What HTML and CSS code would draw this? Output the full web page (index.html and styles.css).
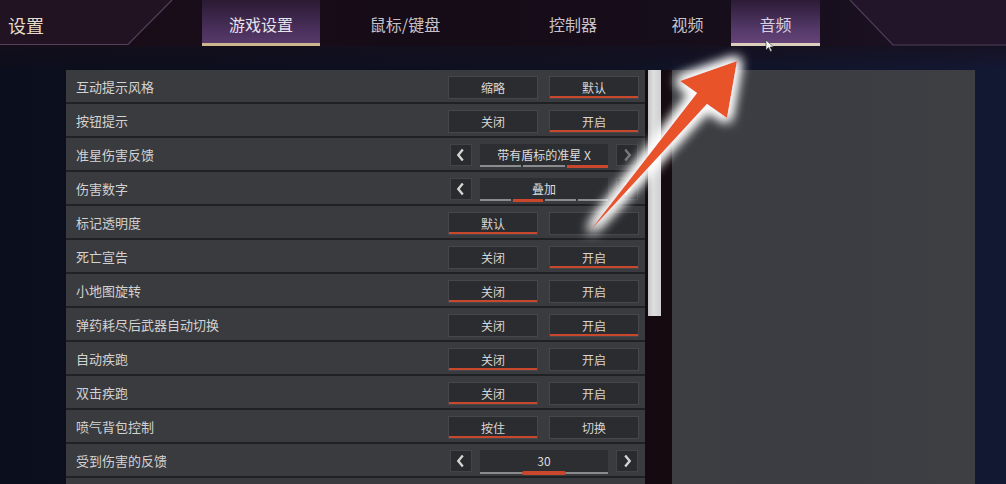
FILE: index.html
```html
<!DOCTYPE html>
<html lang="zh">
<head>
    <meta charset="UTF-8">
    <meta name="viewport" content="width=device-width, initial-scale=1.0">
    <title>设置</title>
    <link rel="stylesheet" href="styles.css">
</head>
<body>
    <header class="topbar">
        <svg class="topbar-lines" width="1006" height="47" viewBox="0 0 1006 47">
            <polygon points="0,0 172,0 128,44 0,44" fill="#221322"/>
            <polyline points="0,44.5 128,44.5 172,0" fill="none" stroke="#54405a" stroke-width="1.2"/>
            <polygon points="850,0 1006,0 1006,45 893,45" fill="#22152a"/>
            <polyline points="850,0 893,45 1006,45" fill="none" stroke="#4e3c5a" stroke-width="1.2"/>
        </svg>
        <div class="brand">设置</div>
        <nav class="tabs">
            <div class="tab tab-game active">游戏设置</div>
            <div class="tab tab-mouse">鼠标/键盘</div>
            <div class="tab tab-pad">控制器</div>
            <div class="tab tab-video">视频</div>
            <div class="tab tab-audio hover">音频</div>
        </nav>
    </header>

    <main class="content">
        <section class="settings">
            <div class="row">
                <span class="label">互动提示风格</span>
                <div class="choices"><div class="btn">缩略</div><div class="btn on">默认</div></div>
            </div>
            <div class="row">
                <span class="label">按钮提示</span>
                <div class="choices"><div class="btn">关闭</div><div class="btn on">开启</div></div>
            </div>
            <div class="row">
                <span class="label">准星伤害反馈</span>
                <div class="picker">
                    <div class="arrow"><svg viewBox="0 0 22 22"><polyline points="13,5 8,11 13,17"/></svg></div>
                    <div class="value">
                        带有盾标的准星 X
                        <div class="segments"><i></i><i></i><i class="on"></i></div>
                    </div>
                    <div class="arrow dim"><svg viewBox="0 0 22 22"><polyline points="9,5 14,11 9,17"/></svg></div>
                </div>
            </div>
            <div class="row">
                <span class="label">伤害数字</span>
                <div class="picker">
                    <div class="arrow"><svg viewBox="0 0 22 22"><polyline points="13,5 8,11 13,17"/></svg></div>
                    <div class="value">
                        叠加
                        <div class="segments"><i></i><i class="on"></i><i></i><i></i></div>
                    </div>
                    <div class="arrow"><svg viewBox="0 0 22 22"><polyline points="9,5 14,11 9,17"/></svg></div>
                </div>
            </div>
            <div class="row">
                <span class="label">标记透明度</span>
                <div class="choices"><div class="btn on">默认</div><div class="btn"></div></div>
            </div>
            <div class="row">
                <span class="label">死亡宣告</span>
                <div class="choices"><div class="btn">关闭</div><div class="btn on">开启</div></div>
            </div>
            <div class="row">
                <span class="label">小地图旋转</span>
                <div class="choices"><div class="btn on">关闭</div><div class="btn">开启</div></div>
            </div>
            <div class="row">
                <span class="label">弹药耗尽后武器自动切换</span>
                <div class="choices"><div class="btn">关闭</div><div class="btn on">开启</div></div>
            </div>
            <div class="row">
                <span class="label">自动疾跑</span>
                <div class="choices"><div class="btn on">关闭</div><div class="btn">开启</div></div>
            </div>
            <div class="row">
                <span class="label">双击疾跑</span>
                <div class="choices"><div class="btn on">关闭</div><div class="btn">开启</div></div>
            </div>
            <div class="row">
                <span class="label">喷气背包控制</span>
                <div class="choices"><div class="btn on">按住</div><div class="btn">切换</div></div>
            </div>
            <div class="row">
                <span class="label">受到伤害的反馈</span>
                <div class="picker">
                    <div class="arrow"><svg viewBox="0 0 22 22"><polyline points="13,5 8,11 13,17"/></svg></div>
                    <div class="value">
                        30
                        <div class="track"><b style="left: 33%; width: 34%;"></b></div>
                    </div>
                    <div class="arrow"><svg viewBox="0 0 22 22"><polyline points="9,5 14,11 9,17"/></svg></div>
                </div>
            </div>
            <div class="row"></div>
        </section>
        <div class="scroll"><div class="thumb"></div></div>
        <aside class="detail"></aside>
    </main>

    <svg class="callout" width="1006" height="484" viewBox="0 0 1006 484">
        <defs>
            <filter id="glow" x="-30%" y="-30%" width="160%" height="160%">
                <feMorphology in="SourceAlpha" operator="dilate" radius="3" result="wide"/>
                <feGaussianBlur in="wide" stdDeviation="6" result="soft"/>
                <feFlood flood-color="#ffffff" flood-opacity="1"/>
                <feComposite in2="soft" operator="in" result="halo"/>
                <feMerge>
                    <feMergeNode in="halo"/>
                    <feMergeNode in="halo"/>
                    <feMergeNode in="SourceGraphic"/>
                </feMerge>
            </filter>
        </defs>
        <polygon filter="url(#glow)" fill="#e8532a"
                 points="589,232 697,93 680,81 737,61 727,118 707,104"/>
        <path d="M766 40 L766 50 L768.5 47.5 L770.5 51.5 L772 50.8 L770 47 L773.5 47 Z" fill="#f2f2f2" stroke="#333" stroke-width="0.6"/>
    </svg>
</body>
</html>
```

FILE: styles.css
```css
body {
    margin: 0;
    width: 1006px;
    height: 484px;
    overflow: hidden;
    font-family: "Noto Sans CJK SC", "Noto Sans", sans-serif;
    background: linear-gradient(to right, #0b0e1c, #0e1122 55%, #131833);
    position: relative;
}
.topbar {
    position: relative;
    height: 46px;
    display: flex;
    background: linear-gradient(to right, #1a0d19, #160c17 40%, #170e1c 75%, #1c1224);
}
.topbar-lines {
    position: absolute;
    left: 0;
    top: 0;
}
.brand {
    position: relative;
    width: 194px;
    padding-left: 8px;
    line-height: 50px;
    font-size: 18px;
    color: #e6dcc6;
}
.tabs {
    position: relative;
    display: flex;
}
.tab {
    height: 46px;
    line-height: 48px;
    text-align: center;
    font-size: 16px;
    color: #c8c2c8;
    box-sizing: border-box;
}
.tab-game {
    width: 118px;
}
.tab-mouse {
    width: 170px;
}
.tab-pad {
    width: 166px;
}
.tab-video {
    width: 63px;
}
.tab-audio {
    width: 89px;
    margin-left: 12px;
}
.tab.active {
    color: #e8e3ec;
    background: linear-gradient(to bottom, #2a1a32, #4a305c 70%, #573a6a);
    border-bottom: 3px solid #cdb78e;
}
.tab.hover {
    color: #d8cfe0;
    background: linear-gradient(to bottom, #2c1b36, #553a6a 70%, #664378);
    border-bottom: 3px solid #dcd0bc;
}
.content {
    display: flex;
    box-sizing: border-box;
    padding: 24px 0 0 66px;
    height: 438px;
    overflow: hidden;
    background: linear-gradient(to bottom, rgba(24, 14, 26, 0.6), rgba(0, 0, 0, 0) 24px);
}
.settings {
    width: 579px;
    background: #202124;
}
.row {
    height: 32px;
    border-bottom: 2px solid #202124;
    background: #3a3b3e;
    display: flex;
    align-items: center;
    padding: 0 6px 0 10px;
}
.label {
    flex: 1;
    font-size: 13px;
    color: #d2d2d2;
}
.choices {
    display: flex;
    gap: 11px;
    margin-top: 3px;
}
.btn {
    width: 90px;
    height: 23px;
    box-sizing: border-box;
    border: 1px solid #46474b;
    background: #2b2c2f;
    color: #d6d6d6;
    font-size: 12px;
    line-height: 21px;
    text-align: center;
}
.btn.on {
    box-shadow: inset 0 -2px 0 #c9482d;
}
.picker {
    display: flex;
    gap: 8px;
    padding-left: 2px;
    margin-top: 2px;
    margin-right: 1px;
}
.arrow {
    width: 22px;
    height: 22px;
    background: #2a2b2e;
    border: 1px solid #434448;
    box-sizing: border-box;
}
.arrow svg {
    display: block;
    width: 20px;
    height: 20px;
    fill: none;
    stroke: #d4d4d4;
    stroke-width: 2.6;
}
.arrow.dim svg {
    stroke: #75767a;
}
.value {
    position: relative;
    width: 128px;
    height: 22px;
    background: #2d2e31;
    color: #dcdcdc;
    font-size: 12px;
    line-height: 22px;
    text-align: center;
}
.segments {
    position: absolute;
    left: 0;
    right: 0;
    bottom: -2px;
    display: flex;
    gap: 2px;
}
.segments i {
    flex: 1;
    height: 2px;
    background: #8b8c8f;
}
.segments i.on {
    height: 3px;
    background: #c9482d;
}
.track {
    position: absolute;
    left: 0;
    right: 0;
    bottom: -2px;
    height: 2px;
    background: #8a8b8e;
}
.track b {
    position: absolute;
    top: -1px;
    height: 4px;
    border-radius: 2px;
    background: #c9482d;
}
.scroll {
    width: 27px;
    background: #140a0f;
}
.thumb {
    margin-left: 3px;
    width: 13px;
    height: 246px;
    background: linear-gradient(to right, #c4c4c4, #dedede 40%, #cfcfcf);
}
.detail {
    width: 303px;
    background: linear-gradient(to right, #3d3e42, #3b3d43 50%, #3e3f43);
}
.callout {
    position: absolute;
    left: 0;
    top: 0;
    pointer-events: none;
}
```
